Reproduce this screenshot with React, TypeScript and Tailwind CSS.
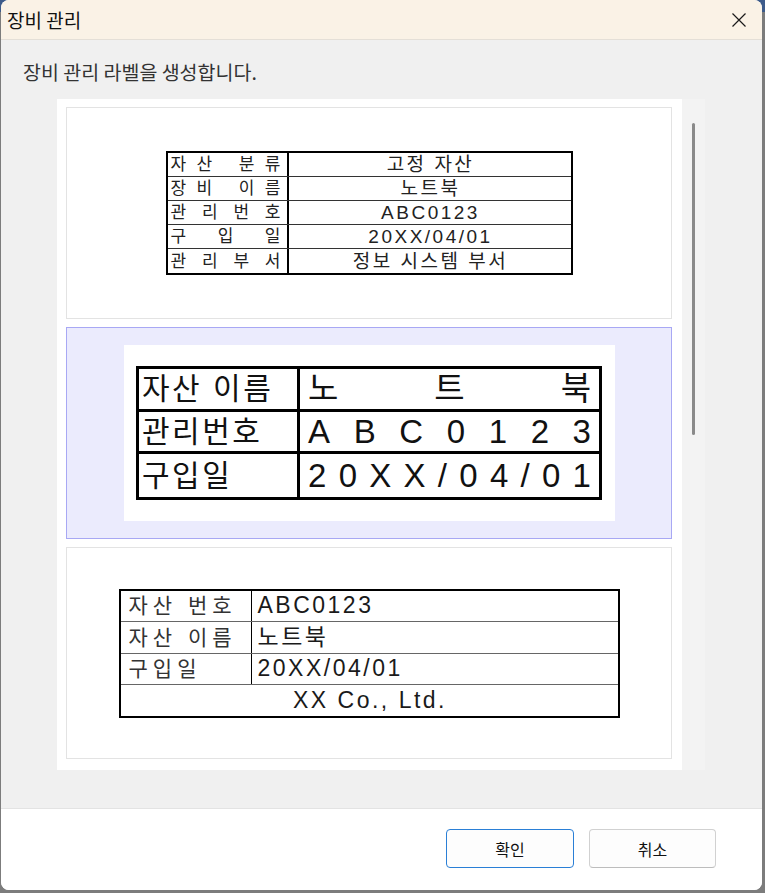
import React from 'react';

const ui = "font-['Noto_Sans_CJK_KR',sans-serif]";
const lbl = "font-['Liberation_Sans','Noto_Sans_CJK_KR',sans-serif]";

// 글자를 칸 폭에 고르게 펼친다
const Spread: React.FC<{ chars: string[]; className?: string }> = ({ chars, className }) => (
  <div className={`flex w-full justify-between ${className ?? ''}`}>
    {chars.map((c, i) =>
      c === ' ' ? <span key={i} className="w-[6px]" /> : <span key={i}>{c}</span>
    )}
  </div>
);

const assetRows = [
  { label: ['자', '산', ' ', '분', '류'], value: '고정 자산' },
  { label: ['장', '비', ' ', '이', '름'], value: '노트북' },
  { label: ['관', '리', '번', '호'], value: 'ABC0123' },
  { label: ['구', '입', '일'], value: '20XX/04/01' },
  { label: ['관', '리', '부', '서'], value: '정보 시스템 부서' },
];

const LabelOne = () => (
  <div className={`w-[407px] border-2 border-black bg-white text-[#222] ${lbl}`}>
    {assetRows.map((r, i) => (
      <div
        key={i}
        className={`flex h-[24.2px] ${i < assetRows.length - 1 ? 'border-b border-[#333]' : ''}`}
      >
        <div className="flex w-[121px] shrink-0 items-center border-r-2 border-black pl-[3px] pr-[6px] text-[17px] leading-none">
          <Spread chars={r.label} />
        </div>
        <div className="flex flex-1 items-center justify-center pl-[2px] text-[19px] leading-none tracking-[2.5px]">
          {r.value}
        </div>
      </div>
    ))}
  </div>
);

const bigRows = [
  { label: '자산 이름', value: ['노', '트', '북'] },
  { label: '관리번호', value: ['A', 'B', 'C', '0', '1', '2', '3'] },
  { label: '구입일', value: ['2', '0', 'X', 'X', '/', '0', '4', '/', '0', '1'] },
];

const LabelTwo = () => (
  <div className="flex h-[176px] w-[491px] items-center justify-center bg-white">
    <div className={`w-[466px] border-[3px] border-black text-[#111] ${lbl}`}>
      {bigRows.map((r, i) => (
        <div
          key={i}
          className={`flex h-[42.7px] ${i < bigRows.length - 1 ? 'border-b-[3px] border-black' : ''}`}
        >
          <div className="flex w-[161px] shrink-0 items-center border-r-[3px] border-black pl-[3px] text-[30px] leading-none tracking-[2.5px]">
            {r.label}
          </div>
          <div className="flex flex-1 items-center px-[8px] text-[33px] leading-none">
            <Spread chars={r.value} />
          </div>
        </div>
      ))}
    </div>
  </div>
);

const tagRows = [
  { label: '자산 번호', value: 'ABC0123' },
  { label: '자산 이름', value: '노트북' },
  { label: '구입일', value: '20XX/04/01' },
];

const LabelThree = () => (
  <div className={`w-[501px] border-2 border-black bg-white text-[#1a1a1a] ${lbl}`}>
    {tagRows.map((r, i) => (
      <div key={i} className="flex h-[31.5px] border-b border-[#666]">
        <div className="flex w-[131px] shrink-0 items-center border-r border-black pl-[8px] text-[21px] leading-none tracking-[5px] text-[#333]">
          {r.label}
        </div>
        <div className="flex flex-1 items-center pl-[6px] text-[23px] leading-none tracking-[2.5px]">
          {r.value}
        </div>
      </div>
    ))}
    <div className="flex h-[30.5px] items-center justify-center pl-[2px] text-[23px] leading-none tracking-[2.5px]">
      XX Co., Ltd.
    </div>
  </div>
);

export default function App() {
  return (
    <div className="h-[893px] w-[765px] bg-[linear-gradient(to_bottom,#3d5b8a_0px,#3d5b8a_12px,#7c7c7c_12px)] pb-[3px] pl-px pr-[3px]">
      <div className={`flex h-full flex-col overflow-hidden rounded-[8px] bg-white ${ui}`}>
        {/* 제목 표시줄 */}
        <div className="flex h-[40px] shrink-0 items-center justify-between border-b border-[#e4dfd7] bg-[#faf2e6] pl-[6px] pr-[15px]">
          <span className="text-[19px] leading-none text-[#111]">장비 관리</span>
          <svg width="16" height="16" viewBox="0 0 16 16" className="text-[#1a1a1a]">
            <path d="M1.5 1.5 L14.5 14.5 M14.5 1.5 L1.5 14.5" stroke="currentColor" strokeWidth="1.2" />
          </svg>
        </div>

        {/* 본문 */}
        <div className="flex flex-1 flex-col border-b border-[#e3e3e3] bg-[#f0f0f0]">
          <p className="pl-[22px] pt-[20px] text-[19.5px] leading-[24px] text-[#333]">
            장비 관리 라벨을 생성합니다.
          </p>
          <div className="ml-[56px] mt-[15px] flex h-[671px]">
            <div className="flex w-[625px] flex-col gap-[8px] overflow-hidden bg-white pl-[9px] pr-[10px] pt-[8px]">
              <div className="flex h-[212px] shrink-0 items-center justify-center border border-[#e3e3e3] bg-white">
                <LabelOne />
              </div>
              <div className="flex h-[212px] shrink-0 items-center justify-center border border-[#a8a8f4] bg-[#ebebfd]">
                <LabelTwo />
              </div>
              <div className="flex h-[212px] shrink-0 items-center justify-center border border-[#e3e3e3] bg-white">
                <LabelThree />
              </div>
            </div>
            <div className="relative w-[23px] bg-[#f3f3f3]">
              <div className="absolute left-[10px] top-[24px] h-[312px] w-[3px] rounded-full bg-[#8a8a8a]" />
            </div>
          </div>
        </div>

        {/* 버튼 영역 */}
        <div className="flex h-[81px] shrink-0 justify-end gap-[15px] bg-white pr-[46px] pt-[20px]">
          <button className="h-[39px] w-[128px] rounded-[4px] border border-[#2a7fd6] bg-[#fdfdfd] text-[16px] text-[#111]">
            확인
          </button>
          <button className="h-[39px] w-[127px] rounded-[4px] border border-[#d1d1d1] border-b-[#bdbdbd] bg-[#fdfdfd] text-[16px] text-[#111]">
            취소
          </button>
        </div>
      </div>
    </div>
  );
}
